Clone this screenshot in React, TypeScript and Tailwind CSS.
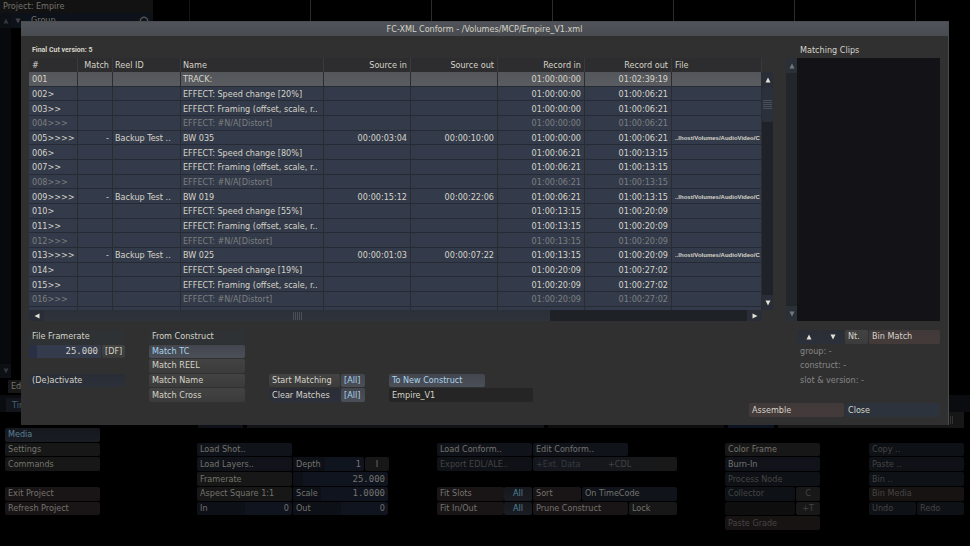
import { useState } from 'react';
import type { ReactNode } from 'react';

type Tone = 'plain' | 'navy' | 'slate' | 'active' | 'red' | 'head' | 'bgPlain' | 'bgNavy' | 'bgActive' | 'bgRed' | 'bgOff' | 'bgOffRed' | 'bgOffPlain' | 'bgExt' | 'bgBlank';

const TONES: Record<Tone, string> = {
  plain: 'bg-linear-to-b from-[#434343] to-[#3b3b3b] text-[#d6d3c7]',
  navy: 'bg-linear-to-b from-[#2a2d35] to-[#2b303b] text-[#d6d3c7]',
  slate: 'bg-[#2c333d] text-[#d6d3c7]',
  active: 'bg-linear-to-b from-[#43464e] to-[#4b4f58] text-[#a9d3ee]',
  red: 'bg-linear-to-b from-[#413a3a] to-[#443a3a] text-[#d6d3c7]',
  head: 'bg-[#2e3234] text-[#d6d3c7]',
  bgPlain: 'bg-[#171717] text-[#74736d]',
  bgNavy: 'bg-[#10131a] text-[#74736d]',
  bgActive: 'bg-linear-to-b from-[#15181d] to-[#1a1e24] text-[#5a8097]',
  bgRed: 'bg-[#191516] text-[#74736d]',
  bgOff: 'bg-[#0e1116] text-[#444444]',
  bgOffRed: 'bg-[#171313] text-[#444444]',
  bgOffPlain: 'bg-[#181818] text-[#444444]',
  bgExt: 'bg-linear-to-r from-[#14171e] to-[#181818] text-[#363a40]',
  bgBlank: 'bg-[#0e0e0e]',
};

interface BtnProps {
  tone?: Tone;
  size?: string;
  pressed?: boolean;
  onClick?: () => void;
  label?: string;
  children?: ReactNode;
}

function Btn({ tone = 'plain', size = 'flex-1', pressed, onClick, label, children }: BtnProps) {
  return (
    <button
      type="button"
      aria-label={label}
      aria-pressed={pressed}
      onClick={onClick}
      className={`${size} ${TONES[tone]} flex items-center min-w-0 rounded-xs px-[3px] text-left whitespace-nowrap overflow-hidden cursor-pointer`}
    >
      {children}
    </button>
  );
}

// One line of a control stack, blank when it has no children
function Line({ children }: { children?: ReactNode }) {
  return <div className="flex flex-1 min-h-0 gap-px pb-px">{children}</div>;
}

function Triangle({ dir, dim }: { dir: 'up' | 'down' | 'left' | 'right'; dim?: boolean }) {
  const points = {
    up: '3,0.5 5.5,5.5 0.5,5.5',
    down: '0.5,0.5 5.5,0.5 3,5.5',
    left: '0.5,3 5.5,0.5 5.5,5.5',
    right: '0.5,0.5 5.5,3 0.5,5.5',
  }[dir];
  return (
    <svg viewBox="0 0 6 6" className="w-1.5 h-1.5 shrink-0 mx-auto" aria-hidden="true">
      <polygon points={points} fill={dim ? '#77797d' : '#e4e1d6'} />
    </svg>
  );
}

interface FieldProps {
  id: string;
  label?: string;
  value: string;
  mono?: boolean;
  split: string;
  size?: string;
}

function DimField({ id, label, value, mono, split, size = 'w-[95px]' }: FieldProps) {
  return (
    <div className={`${size} flex min-w-0 items-center rounded-xs bg-[#10141e] text-[#74736d] overflow-hidden`}>
      <label htmlFor={id} className={`${split} shrink-0 flex items-center self-stretch pl-[3px] bg-[#0d1017] whitespace-nowrap`}>
        {label}
      </label>
      <input
        id={id}
        aria-label={id}
        defaultValue={value}
        className={`flex-1 min-w-0 pr-[3px] text-right bg-transparent outline-none ${mono ? "font-['DejaVu_Sans_Mono',monospace]" : ''}`}
      />
    </div>
  );
}

interface ConformRow {
  no: string;
  reel?: string;
  name: string;
  srcIn?: string;
  srcOut?: string;
  recIn: string;
  recOut: string;
  file?: string;
}

const FILE = '..lhost/Volumes/AudioVideo/C';

const ROWS: ConformRow[] = [
  { no: '001', name: 'TRACK:', recIn: '01:00:00:00', recOut: '01:02:39:19' },
  { no: '002>', name: 'EFFECT: Speed change [20%]', recIn: '01:00:00:00', recOut: '01:00:06:21' },
  { no: '003>>', name: 'EFFECT: Framing (offset, scale, r..', recIn: '01:00:00:00', recOut: '01:00:06:21' },
  { no: '004>>>', name: 'EFFECT: #N/A[Distort]', recIn: '01:00:00:00', recOut: '01:00:06:21' },
  { no: '005>>>>', reel: 'Backup Test ..', name: 'BW 035', srcIn: '00:00:03:04', srcOut: '00:00:10:00', recIn: '01:00:00:00', recOut: '01:00:06:21', file: FILE },
  { no: '006>', name: 'EFFECT: Speed change [80%]', recIn: '01:00:06:21', recOut: '01:00:13:15' },
  { no: '007>>', name: 'EFFECT: Framing (offset, scale, r..', recIn: '01:00:06:21', recOut: '01:00:13:15' },
  { no: '008>>>', name: 'EFFECT: #N/A[Distort]', recIn: '01:00:06:21', recOut: '01:00:13:15' },
  { no: '009>>>>', reel: 'Backup Test ..', name: 'BW 019', srcIn: '00:00:15:12', srcOut: '00:00:22:06', recIn: '01:00:06:21', recOut: '01:00:13:15', file: FILE },
  { no: '010>', name: 'EFFECT: Speed change [55%]', recIn: '01:00:13:15', recOut: '01:00:20:09' },
  { no: '011>>', name: 'EFFECT: Framing (offset, scale, r..', recIn: '01:00:13:15', recOut: '01:00:20:09' },
  { no: '012>>>', name: 'EFFECT: #N/A[Distort]', recIn: '01:00:13:15', recOut: '01:00:20:09' },
  { no: '013>>>>', reel: 'Backup Test ..', name: 'BW 025', srcIn: '00:00:01:03', srcOut: '00:00:07:22', recIn: '01:00:13:15', recOut: '01:00:20:09', file: FILE },
  { no: '014>', name: 'EFFECT: Speed change [19%]', recIn: '01:00:20:09', recOut: '01:00:27:02' },
  { no: '015>>', name: 'EFFECT: Framing (offset, scale, r..', recIn: '01:00:20:09', recOut: '01:00:27:02' },
  { no: '016>>>', name: 'EFFECT: #N/A[Distort]', recIn: '01:00:20:09', recOut: '01:00:27:02' },
];

const COLUMNS = [
  { title: '#', width: 'w-[49px]', align: 'text-left px-[3px]' },
  { title: 'Match', width: 'w-[35px]', align: 'text-right px-[3px]' },
  { title: 'Reel ID', width: 'w-[68px]', align: 'text-left px-0.5' },
  { title: 'Name', width: 'w-[143px]', align: 'text-left px-0.5' },
  { title: 'Source in', width: 'w-[87px]', align: 'text-right px-[3px]' },
  { title: 'Source out', width: 'w-[87px]', align: 'text-right px-[3px]' },
  { title: 'Record in', width: 'w-[87px]', align: 'text-right px-[3px]' },
  { title: 'Record out', width: 'w-[87px]', align: 'text-right px-[3px]' },
  { title: 'File', width: '', align: 'text-left pl-[3px]' },
];

function ConformTable() {
  const [selected, setSelected] = useState('001');

  return (
    <div className="flex-1 min-w-0 overflow-hidden">
      <table className="w-full h-[252px] table-fixed border-separate border-spacing-0 leading-[11px]">
        <thead>
          <tr className="h-[14px]">
            {COLUMNS.map((c) => (
              <th key={c.title} className={`${c.width} ${c.align} py-0 font-normal whitespace-nowrap text-[#d6d3c7] border-r border-[#3a3a3c] bg-[#2d2d2f]`}>
                {c.title}
              </th>
            ))}
          </tr>
        </thead>
        <tbody>
          {ROWS.map((row) => {
            const isSelected = row.no === selected;
            const muted = row.name.includes('[Distort]');
            const cells = [row.no, row.reel ? '-' : '', row.reel, row.name, row.srcIn, row.srcOut, row.recIn, row.recOut, row.file];
            return (
              <tr
                key={row.no}
                onClick={() => setSelected(row.no)}
                className={`h-[14px] ${isSelected ? 'bg-linear-to-b from-[#53565b] to-[#5a5c60]' : 'bg-[#333b4b]'} ${muted ? 'text-[#7e7e7e]' : 'text-[#d6d3c7]'}`}
              >
                {cells.map((cell, i) => (
                  <td
                    key={COLUMNS[i].title}
                    className={`${COLUMNS[i].align} pb-0 pt-0.5 border-r border-b border-r-[#2b2c30] border-b-[#252a35] whitespace-nowrap overflow-hidden`}
                  >
                    {i === 8 ? <span className="block font-['Liberation_Sans',sans-serif] font-bold text-[6px] leading-[11px]">{cell}</span> : cell}
                  </td>
                ))}
              </tr>
            );
          })}
          {/* Top edge of the next row */}
          <tr className="h-[3px] bg-[#333b4b]">
            {COLUMNS.map((c) => <td key={c.title} className="p-0 border-r border-[#2b2c30]"></td>)}
          </tr>
        </tbody>
      </table>
    </div>
  );
}

function ConformDialog() {
  const [match, setMatch] = useState('Match TC');

  return (
    <section role="dialog" aria-labelledby="dialog-title" className="w-full bg-[#303031] border-t border-r border-[#4a4c50] text-[#d6d3c7]">
      <h1 id="dialog-title" className="h-[14px] flex items-center justify-center bg-linear-to-b from-[#50545a] to-[#484b50]">
        FC-XML Conform - /Volumes/MCP/Empire_V1.xml
      </h1>

      <div className="px-2 pb-2">
        <div className="flex gap-[13px]">
          {/* Event list */}
          <div className="flex-1 min-w-0">
            <p className="h-[22px] flex items-center pt-1.5 pl-[3px] font-['Roboto',sans-serif] font-bold text-[7px]">
              Final Cut version: 5
            </p>
            <div className="flex">
              <ConformTable />
              <div className="w-[11px] flex flex-col pt-[14px]">
                <button type="button" aria-label="Scroll up" className="h-[15px] flex items-center bg-[#282d38]"><Triangle dir="up" /></button>
                <div className="flex-1 bg-[#1f2329]">
                  <div className="h-[35px] flex flex-col justify-center gap-px px-px bg-[#2b313c] rounded-xs">
                    {[1, 2, 3, 4, 5].map((i) => <span key={i} className="h-px bg-[#4a4f59]"></span>)}
                  </div>
                </div>
                <button type="button" aria-label="Scroll down" className="h-[15px] flex items-center bg-[#282d38]"><Triangle dir="down" /></button>
              </div>
            </div>
            <div className="flex h-[11px] pr-[11px]">
              <button type="button" aria-label="Scroll left" className="w-[15px] flex items-center bg-[#282d38]"><Triangle dir="left" /></button>
              <div className="flex-1 bg-[#1e2126]">
                <div className="w-[72%] h-full flex items-center justify-center gap-px bg-linear-to-b from-[#2a3039] to-[#2f333b]">
                  {[1, 2, 3, 4, 5].map((i) => <span key={i} className="w-px h-2 bg-[#4c4f55]"></span>)}
                </div>
              </div>
              <button type="button" aria-label="Scroll right" className="w-[15px] flex items-center bg-[#282d38]"><Triangle dir="right" /></button>
            </div>
          </div>

          {/* Matching clips */}
          <div className="w-[154px] flex flex-col">
            <h2 className="h-[22px] flex items-center pt-1.5 pl-[14px]">Matching Clips</h2>
            <div className="flex flex-1">
              <div className="w-[11px] flex flex-col">
                <button type="button" aria-label="Clips up" className="h-[15px] flex items-center bg-[#2b2f37]"><Triangle dir="up" dim /></button>
                <div className="flex-1 bg-[#22262b]"></div>
                <button type="button" aria-label="Clips down" className="h-[15px] flex items-center bg-[#2b2f37]"><Triangle dir="down" dim /></button>
              </div>
              <div className="flex-1 bg-[#121217]"></div>
            </div>
          </div>
        </div>

        <div className="flex gap-6 pt-[9px]">
          <div className="w-24 h-[73px] flex flex-col">
            <Line><label htmlFor="framerate" className={`${TONES.head} flex-1 flex items-center pl-[3px]`}>File Framerate</label></Line>
            <Line>
              <input
                id="framerate"
                defaultValue="25.000"
                className="w-[72px] border-l-8 border-[#273044] bg-[#333b4d] pr-[3px] text-right font-['DejaVu_Sans_Mono',monospace] outline-none"
              />
              <Btn>[DF]</Btn>
            </Line>
            <Line />
            <Line><Btn tone="navy">(De)activate</Btn></Line>
            <Line />
          </div>

          <div className="w-24 h-[73px] flex flex-col">
            <Line><span className={`${TONES.head} flex-1 flex items-center pl-[3px]`}>From Construct</span></Line>
            {['Match TC', 'Match REEL', 'Match Name', 'Match Cross'].map((name) => (
              <Line key={name}>
                <Btn tone={match === name ? 'active' : 'plain'} pressed={match === name} onClick={() => setMatch(name)}>{name}</Btn>
              </Line>
            ))}
          </div>

          <div className="w-24 h-[73px] flex flex-col">
            <Line /><Line /><Line />
            <Line><Btn>Start Matching</Btn><Btn tone="active" size="w-6" pressed>[All]</Btn></Line>
            <Line><Btn tone="navy">Clear Matches</Btn><Btn tone="active" size="w-6" pressed>[All]</Btn></Line>
          </div>

          <div className="w-36 h-[73px] flex flex-col">
            <Line /><Line /><Line />
            <Line><Btn tone="active" size="w-24" pressed>To New Construct</Btn></Line>
            <Line>
              <input aria-label="Construct name" defaultValue="Empire_V1" className="flex-1 min-w-0 rounded-xs bg-[#252525] px-[3px] outline-none" />
            </Line>
          </div>

          <div className="w-[143px] h-[73px] flex flex-col ml-auto">
            <Line>
              <Btn tone="navy" size="w-[23px]" label="Previous clip"><Triangle dir="up" /></Btn>
              <Btn tone="navy" size="w-[23px]" label="Next clip"><Triangle dir="down" /></Btn>
              <Btn size="w-[23px]">Nt.</Btn>
              <Btn tone="red">Bin Match</Btn>
            </Line>
            {['group: -', 'construct: -', 'slot & version: -'].map((info) => (
              <Line key={info}><span className="flex items-center pl-[3px] text-[#868686]">{info}</span></Line>
            ))}
            <Line />
          </div>
        </div>

        <div className="h-[14px] flex justify-end gap-px">
          <Btn tone="red" size="w-[95px]">Assemble</Btn>
          <Btn tone="slate" size="w-[95px]">Close</Btn>
        </div>
      </div>
    </section>
  );
}

function Backdrop() {
  return (
    <div className="min-h-screen flex flex-col bg-black text-[#74736d]">
      {/* Construct view */}
      <div className="flex h-[378px]">
        <aside className="w-[153px] flex flex-col">
          <div className="h-[13px] flex items-center pl-[3px] bg-[#121212]">Project: Empire</div>
          <div className="flex flex-1">
            <div className="w-[11px] flex flex-col justify-between bg-[#07090c]">
              <span className="h-[15px] flex items-center opacity-40 bg-[#14181f]"><Triangle dir="up" dim /></span>
              <span className="h-[14px] flex items-center opacity-40 bg-[#14181f]"><Triangle dir="down" dim /></span>
            </div>
            <div className="flex-1 h-[15px] flex items-center gap-1.5 px-1 bg-[#0d1119]">
              <span className="opacity-50"><Triangle dir="down" dim /></span>
              <span className="flex-1 pl-1">Group</span>
              <svg viewBox="0 0 10 10" className="w-2.5 h-2.5" fill="none" stroke="#5a5a58" strokeWidth="1.2" aria-hidden="true">
                <path d="M2.2 7.2A3.6 3.6 0 1 1 7.8 7.2M6.2 7.2h2.2v-2" />
              </svg>
            </div>
          </div>
        </aside>
        <div className="w-[37px] border-r border-[#141414]"></div>
        {[1, 2, 3, 4, 5, 6].map((i) => <div key={i} className="w-[121px] border-r border-[#2c2c2c]"></div>)}
      </div>

      <div className="h-[17px] flex items-center pl-2"><span className="w-24 pl-[3px] bg-[#171717]">Edit</span></div>
      <div className="h-[17px] flex items-end bg-[#0a0c10]"><span className="ml-1.5 pl-1.5 w-24 h-[14px] leading-[14px] bg-[#12161c] text-[#456070]">Timeline</span></div>
      <div className="h-4 flex gap-1 pl-[198px] pr-1.5">
        <span className="w-[45px] bg-[#0d1017]"></span>
        <span className="w-[297px] bg-[#111215]"></span>
        <span className="w-[176px] bg-[#0d0d0d]"></span>
        <span className="w-[46px] bg-[#0d1220]"></span>
        <span className="flex-1 flex items-center justify-end gap-px pr-[11px] bg-[#161616]">
          {[1, 2, 3].map((i) => <span key={i} className="w-px h-2 bg-[#333333]"></span>)}
        </span>
      </div>

      {/* Tool menus */}
      <div className="flex justify-between h-[103px] pl-[5px] pr-[5px]">
        <div className="w-24 flex flex-col pr-px">
          <Line><Btn tone="bgActive" pressed>Media</Btn></Line>
          <Line><Btn tone="bgPlain">Settings</Btn></Line>
          <Line><Btn tone="bgPlain">Commands</Btn></Line>
          <Line />
          <Line><Btn tone="bgRed">Exit Project</Btn></Line>
          <Line><Btn tone="bgRed">Refresh Project</Btn></Line>
          <Line />
        </div>

        <div className="w-48 flex flex-col ml-12">
          <Line />
          <Line><Btn tone="bgNavy" size="w-[95px]">Load Shot..</Btn></Line>
          <Line>
            <Btn tone="bgNavy" size="w-[95px]">Load Layers..</Btn>
            <DimField id="Depth" label="Depth" value="1" mono split="w-8" size="w-[71px]" />
            <Btn tone="bgPlain" size="w-6"><span className="mx-auto">I</span></Btn>
          </Line>
          <Line>
            <Btn tone="bgPlain" size="w-[95px]">Framerate</Btn>
            <DimField id="Framerate" value="25.000" mono split="w-2.5" />
          </Line>
          <Line>
            <Btn tone="bgPlain" size="w-[95px]">Aspect Square 1:1</Btn>
            <DimField id="Scale" label="Scale" value="1.0000" mono split="w-7" />
          </Line>
          <Line>
            <DimField id="In" label="In" value="0" split="w-12" />
            <DimField id="Out" label="Out" value="0" split="w-12" />
          </Line>
          <Line />
        </div>

        <div className="w-60 flex flex-col">
          <Line />
          <Line><Btn tone="bgNavy" size="w-[95px]">Load Conform..</Btn><Btn tone="bgNavy" size="w-[95px]">Edit Conform..</Btn></Line>
          <Line>
            <Btn tone="bgOff" size="w-[95px]">Export EDL/ALE..</Btn>
            <Btn tone="bgExt"><span className="w-[72px]">+Ext. Data</span><span className="text-[#444444]">+CDL</span></Btn>
          </Line>
          <Line />
          <Line>
            <div className="flex w-[95px]"><Btn tone="bgRed">Fit Slots</Btn><Btn tone="bgActive" size="w-7" pressed><span className="mx-auto">All</span></Btn></div>
            <Btn tone="bgRed" size="w-12">Sort</Btn>
            <Btn tone="bgNavy">On TimeCode</Btn>
          </Line>
          <Line>
            <div className="flex w-[95px]"><Btn tone="bgRed">Fit In/Out</Btn><Btn tone="bgActive" size="w-7" pressed><span className="mx-auto">All</span></Btn></div>
            <Btn tone="bgRed" size="w-[95px]">Prune Construct</Btn>
            <Btn tone="bgPlain">Lock</Btn>
          </Line>
          <Line />
        </div>

        <div className="w-24 flex flex-col pr-px">
          <Line />
          <Line><Btn tone="bgPlain">Color Frame</Btn></Line>
          <Line><Btn tone="bgNavy">Burn-In</Btn></Line>
          <Line><Btn tone="bgOff">Process Node</Btn></Line>
          <Line><Btn tone="bgOff">Collector</Btn><Btn tone="bgOffPlain" size="w-6"><span className="mx-auto">C</span></Btn></Line>
          <Line><Btn tone="bgBlank" label="Collector slot" /><Btn tone="bgOffPlain" size="w-6"><span className="mx-auto">+T</span></Btn></Line>
          <Line><Btn tone="bgOffRed">Paste Grade</Btn></Line>
        </div>

        <div className="w-24 flex flex-col pr-px">
          <Line />
          <Line><Btn tone="bgOff">Copy ..</Btn></Line>
          <Line><Btn tone="bgOff">Paste ..</Btn></Line>
          <Line><Btn tone="bgOff">Bin ..</Btn></Line>
          <Line><Btn tone="bgOffRed">Bin Media</Btn></Line>
          <Line><Btn tone="bgOff">Undo</Btn><Btn tone="bgOff">Redo</Btn></Line>
          <Line />
        </div>
      </div>
    </div>
  );
}

export default function App() {
  return (
    <main className="relative bg-black font-['DejaVu_Sans_Condensed','DejaVu_Sans',sans-serif] text-[9px] leading-[13px]">
      <Backdrop />
      <div className="absolute inset-0 px-[21px] pt-[21px]">
        <ConformDialog />
      </div>
    </main>
  );
}
